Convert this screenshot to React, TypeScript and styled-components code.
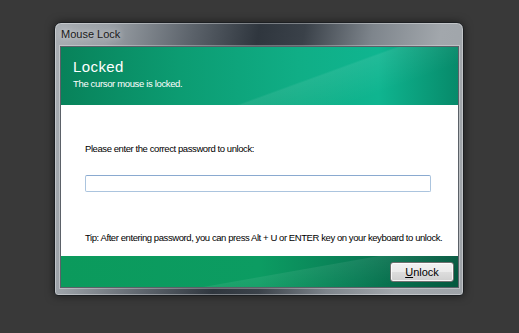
import * as React from 'react';
import styled, { createGlobalStyle } from 'styled-components';

const GlobalStyle = createGlobalStyle`
  html, body {
    margin: 0;
    padding: 0;
    background: #393939;
  }
  body {
    font-family: "Liberation Sans", Arial, sans-serif;
  }
`;

export default function App() {
  const [password, setPassword] = React.useState('');

  return (
    <>
      <GlobalStyle />
      <Desktop>
        <Window>
          <TitleBar>Mouse Lock</TitleBar>
          <Client>
            <Header>
              <HeaderTitle>Locked</HeaderTitle>
              <HeaderSubtitle>The cursor mouse is locked.</HeaderSubtitle>
            </Header>
            <Body>
              <Label>Please enter the correct password to unlock:</Label>
              <PasswordInput
                type="password"
                value={password}
                onChange={(e) => setPassword(e.target.value)}
              />
              <Label $gap={40}>
                Tip: After entering password, you can press Alt + U or ENTER key on your keyboard to unlock.
              </Label>
            </Body>
            <Footer>
              <Button>
                <u>U</u>nlock
              </Button>
            </Footer>
          </Client>
        </Window>
      </Desktop>
    </>
  );
}

const Desktop = styled.div`
  width: 519px;
  height: 333px;
  padding: 22px 0 0 54px;
  box-sizing: border-box;
`;

const Window = styled.div`
  width: 410px;
  height: 274px;
  box-sizing: border-box;
  border: 1px solid #1c1f22;
  border-radius: 7px 7px 4px 4px;
  background: linear-gradient(
    100deg,
    #a9aeb3 0%,
    #9aa0a6 12%,
    #5d646c 30%,
    #2f363e 45%,
    #3a4149 55%,
    #7e858c 70%,
    #a2a7ac 85%,
    #9ea3a8 100%
  );
  box-shadow: inset 0 0 0 1px rgba(255, 255, 255, 0.35), 0 0 8px rgba(0, 0, 0, 0.5);
  padding: 0 4px 7px 5px;
  display: flex;
  flex-direction: column;
`;

const TitleBar = styled.div`
  height: 23px;
  line-height: 23px;
  padding-left: 1px;
  font-size: 11px;
  color: #1a1a1a;
  text-shadow: 0 0 6px rgba(255, 255, 255, 0.8);
`;

const Client = styled.div`
  flex: 1;
  display: flex;
  flex-direction: column;
  border: 1px solid #5b6168;
  box-shadow: 0 0 0 1px rgba(255, 255, 255, 0.3);
`;

const Header = styled.div`
  height: 58px;
  box-sizing: border-box;
  padding: 11px 0 0 12px;
  background:
    linear-gradient(160deg, transparent 60%, rgba(255, 255, 255, 0.08) 61%, transparent 80%),
    linear-gradient(90deg, #08825a 0%, #0c9c72 30%, #10ae86 60%, #0fb590 80%, #078a6a 100%);
  color: #ffffff;
`;

const HeaderTitle = styled.div`
  font-size: 15px;
  letter-spacing: 0.4px;
  line-height: 18px;
`;

const HeaderSubtitle = styled.div`
  margin-top: 2px;
  font-size: 9.5px;
  line-height: 12px;
  letter-spacing: -0.35px;
`;

const Body = styled.div`
  flex: 1;
  background: #ffffff;
  padding: 38px 28px 0 24px;
  display: flex;
  flex-direction: column;
`;

const Label = styled.div<{ $gap?: number }>`
  margin-top: ${({ $gap }) => $gap ?? 0}px;
  font-size: 9.5px;
  letter-spacing: -0.42px;
  line-height: 12px;
  color: #000000;
  white-space: nowrap;
`;

const PasswordInput = styled.input`
  margin-top: 20px;
  width: 346px;
  height: 17px;
  box-sizing: border-box;
  border: 1px solid #abc4de;
  border-top-color: #8aaad0;
  border-radius: 2px;
  outline: none;
  padding: 0 3px;
  font-size: 11px;
`;

const Footer = styled.div`
  height: 31px;
  box-sizing: border-box;
  display: flex;
  justify-content: flex-end;
  align-items: center;
  padding-right: 4px;
  background:
    linear-gradient(170deg, transparent 55%, rgba(255, 255, 255, 0.07) 56%, transparent 85%),
    linear-gradient(90deg, #0b9a5c 0%, #0c9c62 50%, #097c55 75%, #04583f 100%);
`;

const Button = styled.button`
  width: 64px;
  height: 20px;
  box-sizing: border-box;
  padding: 0;
  border: 1px solid #707070;
  border-radius: 3px;
  background: linear-gradient(180deg, #f2f2f2 0%, #ebebeb 48%, #dddddd 52%, #cfcfcf 100%);
  box-shadow: inset 0 0 0 1px rgba(255, 255, 255, 0.8);
  font-family: "Liberation Sans", Arial, sans-serif;
  font-size: 11px;
  color: #000000;
  cursor: pointer;
`;
